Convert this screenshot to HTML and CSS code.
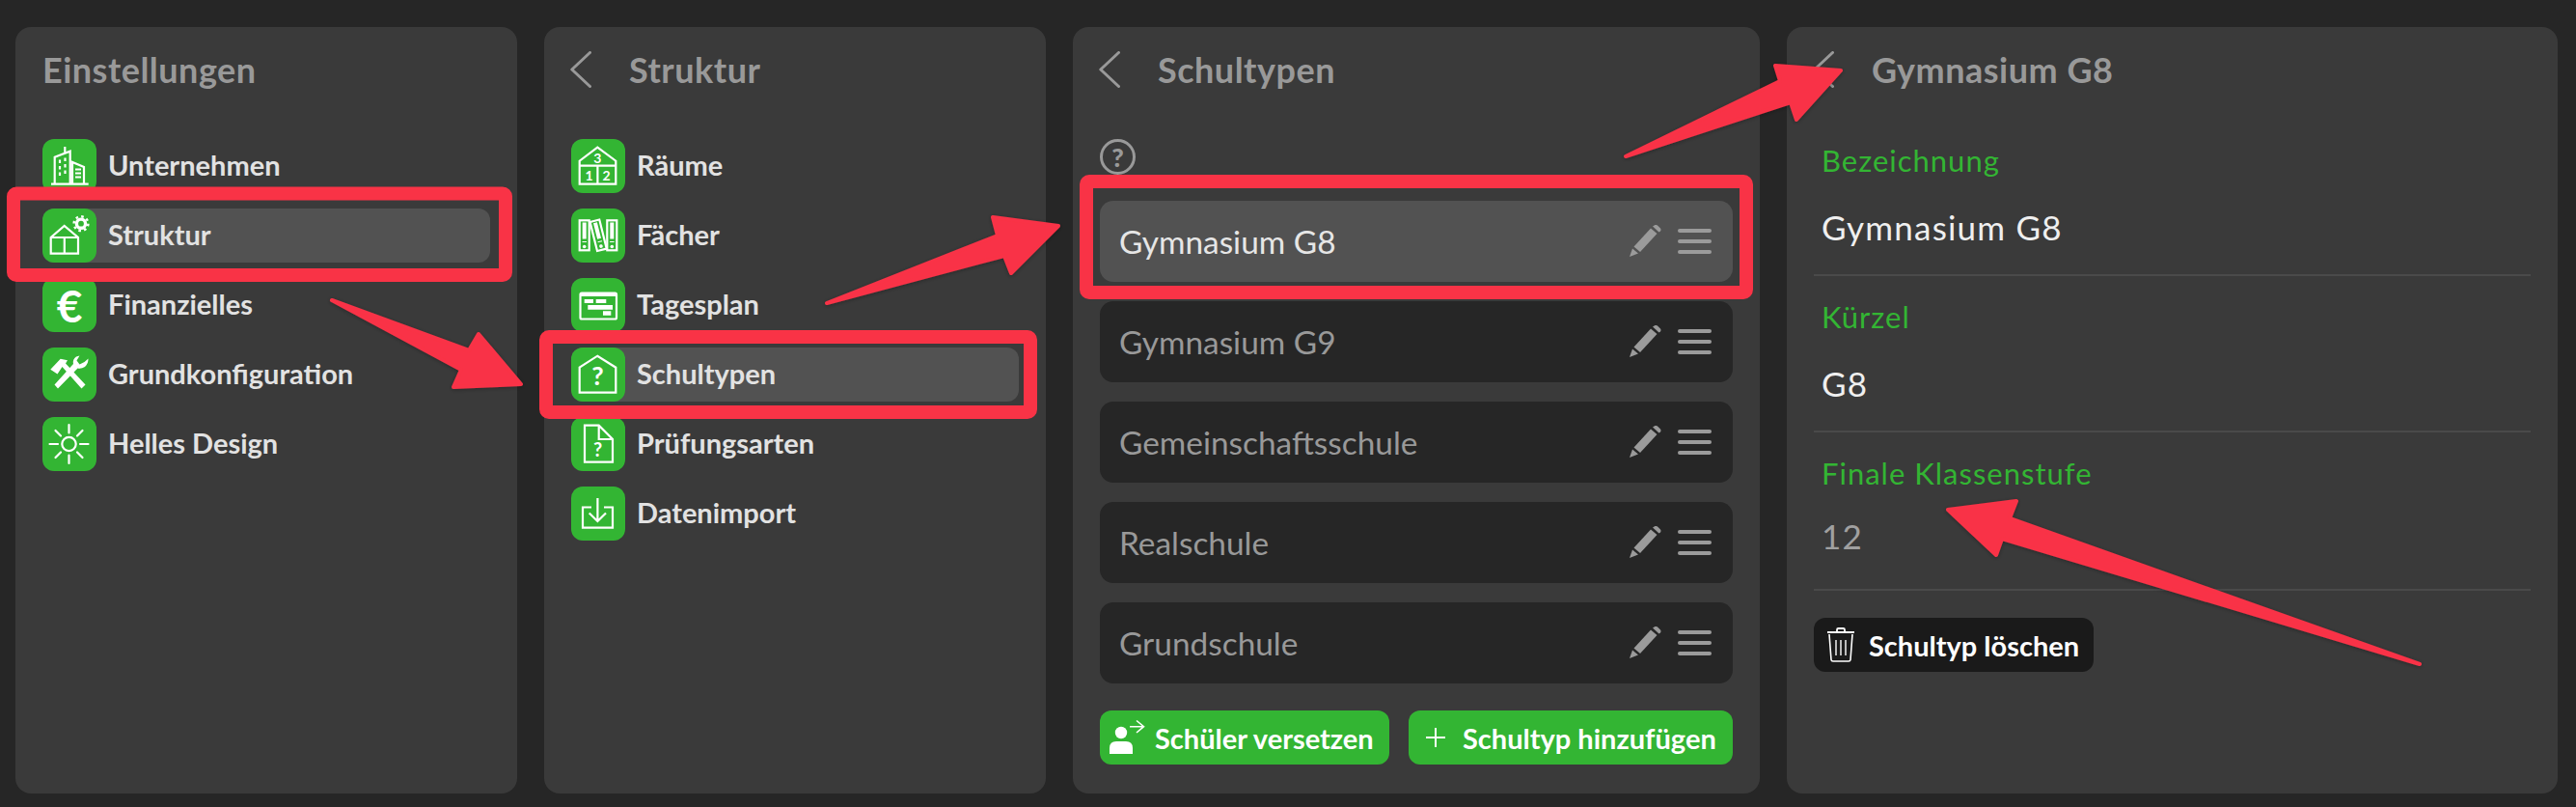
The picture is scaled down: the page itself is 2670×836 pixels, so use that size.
FILE: index.html
```html
<!DOCTYPE html>
<html lang="de">
<head>
    <meta charset="UTF-8">
    <title>Schultypen</title>
    <link rel="stylesheet" href="styles.css">
</head>
<body>
    <svg class="sprites" width="0" height="0">
        <symbol id="pencil" viewBox="0 0 34 34">
            <path d="M0 33 L3 24.5 L9 29.5 Z" fill="#9b9b9b"/>
            <path d="M4.5 22.5 L22 3.5 L28.5 9 L11 28 Z" fill="#9b9b9b"/>
            <path d="M24 1.5 L26.5 0 Q28 -0.3 29.5 1 L32 3.5 Q33 5 32 6.5 L30.5 7.5 Z" fill="#9b9b9b"/>
        </symbol>
        <symbol id="burger" viewBox="0 0 35 26">
            <rect x="0" y="0" width="35" height="4" rx="2" fill="#9b9b9b"/>
            <rect x="0" y="11" width="35" height="4" rx="2" fill="#9b9b9b"/>
            <rect x="0" y="22" width="35" height="4" rx="2" fill="#9b9b9b"/>
        </symbol>
        <symbol id="chevron" viewBox="0 0 22 38">
            <path d="M20.5 1.5 L1.8 19 L20.5 36.5" fill="none" stroke="#999" stroke-width="3" stroke-linecap="round" stroke-linejoin="round"/>
        </symbol>
    </svg>

    <div class="board">
        <!-- Einstellungen -->
        <section class="panel">
            <div class="head"><h2>Einstellungen</h2></div>
            <ul class="menu">
                <li class="menu-row">
                    <svg class="tile" viewBox="0 0 56 56">
                        <path class="ln" d="M9 46.7 H47.7 M12.7 46.7 V18.7 L28.7 12.7 V46.7 M23.3 15 V8 M31 46.7 V24 L43 29 V46.7"/>
                        <path class="ln" stroke-dasharray="3.5 3" d="M18 21.5 V38 M23.5 19.5 V38"/>
                        <path class="ln" d="M34 31.5 H40 M34 35.5 H40 M34 39.5 H40"/>
                    </svg>
                    <span class="menu-label">Unternehmen</span>
                </li>
                <li class="menu-row active">
                    <svg class="tile" viewBox="0 0 56 56">
                        <path class="ln" d="M8.7 46.7 V30 L22.7 18 L37 30 V46.7 Z M8.7 30 H37 M22.8 30 V46.7"/>
                        <circle cx="40" cy="15.7" r="4.6" fill="none" stroke="#fff" stroke-width="3.4"/>
                        <circle cx="40" cy="15.7" r="7.4" fill="none" stroke="#fff" stroke-width="2.4" stroke-dasharray="2.6 3.2"/>
                    </svg>
                    <span class="menu-label">Struktur</span>
                </li>
                <li class="menu-row">
                    <span class="tile tile-glyph">€</span>
                    <span class="menu-label">Finanzielles</span>
                </li>
                <li class="menu-row">
                    <svg class="tile" viewBox="0 0 56 56">
                        <path d="M8.3 22.7 L18.7 11.7 L26 13.3 L24 16.5 L44.5 38.5 L40.5 42.5 L20.5 20 L15.5 27.5 Z" fill="#fff"/>
                        <path d="M16 42.5 L12.5 38.5 L32 17 Q31 12 35 9.5 L38.5 8.5 L35.5 13.5 L38.5 17.5 L43.5 15 L47.5 11.5 Q47.5 17 44 20 Q40 22.5 36.5 21.5 Z" fill="#fff"/>
                    </svg>
                    <span class="menu-label">Grundkonfiguration</span>
                </li>
                <li class="menu-row">
                    <svg class="tile" viewBox="0 0 56 56">
                        <circle class="ln" cx="27.5" cy="28" r="7.2"/>
                        <path class="ln" stroke-linecap="round" d="M27.5 8 V16.5 M27.5 39.5 V48 M7.5 28 H16 M39 28 H47.5 M13.5 14 L19 19.5 M36 36.5 L41.5 42 M13.5 42 L19 36.5 M36 19.5 L41.5 14"/>
                    </svg>
                    <span class="menu-label">Helles Design</span>
                </li>
            </ul>
        </section>

        <!-- Struktur -->
        <section class="panel">
            <div class="head"><svg class="back"><use href="#chevron"/></svg><h2>Struktur</h2></div>
            <ul class="menu">
                <li class="menu-row">
                    <svg class="tile" viewBox="0 0 56 56">
                        <path class="ln" d="M8.7 46.7 V22.7 L27.3 8.7 L46.3 22.7 V46.7 Z M8.7 27.7 H46.3 M27.4 27.7 V46.7"/>
                        <text class="tile-num" x="27.4" y="25">3</text>
                        <text class="tile-num" x="18.5" y="42.5">1</text>
                        <text class="tile-num" x="36.5" y="42.5">2</text>
                    </svg>
                    <span class="menu-label">Räume</span>
                </li>
                <li class="menu-row">
                    <svg class="tile" viewBox="0 0 56 56">
                        <g id="binder">
                            <rect class="ln" x="8.7" y="12.3" width="10" height="31"/>
                            <rect x="11.7" y="14.5" width="4" height="17" fill="#fff"/>
                            <path class="ln-thin" d="M11.5 34.5 H16"/>
                            <circle cx="13.7" cy="39.5" r="1.8" fill="#fff"/>
                        </g>
                        <use href="#binder" transform="translate(28.6 0)"/>
                        <use href="#binder" transform="rotate(-14 28 28) translate(14.5 0)"/>
                    </svg>
                    <span class="menu-label">Fächer</span>
                </li>
                <li class="menu-row">
                    <svg class="tile" viewBox="0 0 56 56">
                        <rect class="ln" x="9.5" y="15.5" width="37.5" height="27" rx="1.5"/>
                        <path d="M9.5 16 H47 V19 H9.5 Z M13.7 22 H23 V26 H13.7 Z M25.7 22 H36.3 V26 H25.7 Z M17.3 28 H43 V32.7 H17.3 Z M33 34.3 H41.3 V38.7 H33 Z" fill="#fff"/>
                    </svg>
                    <span class="menu-label">Tagesplan</span>
                </li>
                <li class="menu-row active">
                    <svg class="tile" viewBox="0 0 56 56">
                        <path class="ln" d="M8.7 46.7 V20.7 L27.3 8.7 L46.3 20.7 V46.7 Z"/>
                        <text class="tile-q" x="27.5" y="39">?</text>
                    </svg>
                    <span class="menu-label">Schultypen</span>
                </li>
                <li class="menu-row">
                    <svg class="tile" viewBox="0 0 56 56">
                        <path class="ln" d="M14 8.7 H28.7 L43 23 V46.7 H14 Z M28.7 8.7 V23 H43"/>
                        <text class="tile-q tile-q-small" x="27.5" y="41">?</text>
                    </svg>
                    <span class="menu-label">Prüfungsarten</span>
                </li>
                <li class="menu-row">
                    <svg class="tile" viewBox="0 0 56 56">
                        <path class="ln" d="M21 21.5 H12 V42.7 H43 V21.5 H34"/>
                        <path class="ln" d="M27.4 12 V36 M18.7 27.5 L27.4 36 L36 27.5"/>
                    </svg>
                    <span class="menu-label">Datenimport</span>
                </li>
            </ul>
        </section>

        <!-- Schultypen -->
        <section class="panel">
            <div class="head"><svg class="back"><use href="#chevron"/></svg><h2>Schultypen</h2></div>
            <div class="help">?</div>
            <ul class="types">
                <li class="type-row active"><span>Gymnasium G8</span><svg class="pencil"><use href="#pencil"/></svg><svg class="burger"><use href="#burger"/></svg></li>
                <li class="type-row"><span>Gymnasium G9</span><svg class="pencil"><use href="#pencil"/></svg><svg class="burger"><use href="#burger"/></svg></li>
                <li class="type-row"><span>Gemeinschaftsschule</span><svg class="pencil"><use href="#pencil"/></svg><svg class="burger"><use href="#burger"/></svg></li>
                <li class="type-row"><span>Realschule</span><svg class="pencil"><use href="#pencil"/></svg><svg class="burger"><use href="#burger"/></svg></li>
                <li class="type-row"><span>Grundschule</span><svg class="pencil"><use href="#pencil"/></svg><svg class="burger"><use href="#burger"/></svg></li>
            </ul>
            <div class="actions">
                <button class="btn btn-move">
                    <svg class="btn-icon" viewBox="0 0 50 56">
                        <circle cx="22" cy="23" r="6.2" fill="#fff"/>
                        <path d="M10 45 V39 Q10 32 17 32 H27 Q34 32 34 39 V45 Z" fill="#fff"/>
                        <path d="M31 16.7 H45.5 M38 10.5 L45.5 16.7 L38 23" fill="none" stroke="#fff" stroke-width="1.6"/>
                    </svg>
                    Schüler versetzen
                </button>
                <button class="btn btn-add">
                    <svg class="plus" viewBox="0 0 20 20"><path d="M10 0 V20 M0 10 H20" stroke="#fff" stroke-width="2"/></svg>
                    Schultyp hinzufügen
                </button>
            </div>
        </section>

        <!-- Gymnasium G8 -->
        <section class="panel">
            <div class="head"><svg class="back"><use href="#chevron"/></svg><h2>Gymnasium G8</h2></div>
            <div class="field">
                <div class="field-label">Bezeichnung</div>
                <div class="field-value">Gymnasium G8</div>
            </div>
            <div class="field">
                <div class="field-label">Kürzel</div>
                <div class="field-value">G8</div>
            </div>
            <div class="field field-disabled">
                <div class="field-label">Finale Klassenstufe</div>
                <div class="field-value">12</div>
            </div>
            <button class="btn btn-delete">
                <svg class="btn-icon" viewBox="0 0 50 56">
                    <path d="M14 15 H42 M24 15 V12.5 Q24 11 25.5 11 H30.5 Q32 11 32 12.5 V15" fill="none" stroke="#fff" stroke-width="1.8"/>
                    <path d="M16 17 L18 43.5 Q18.2 45 20 45 H36 Q37.8 45 38 43.5 L40 17" fill="none" stroke="#fff" stroke-width="1.6"/>
                    <path d="M23 23 V39 M28 23 V39 M33 23 V39" stroke="#fff" stroke-width="1.4"/>
                </svg>
                Schultyp löschen
            </button>
        </section>
    </div>

    <!-- annotations drawn on top of the screenshot -->
    <svg class="marks" viewBox="0 0 2670 836">
        <defs>
            <filter id="soft" x="-5%" y="-5%" width="110%" height="115%">
                <feDropShadow dx="0" dy="1" stdDeviation="2" flood-color="#000" flood-opacity="0.3"/>
            </filter>
        </defs>
        <rect class="frame" x="14" y="200.5" width="510" height="84.5" rx="3"/>
        <rect class="frame" x="566" y="349" width="502" height="78" rx="3"/>
        <rect class="frame" x="1126" y="188" width="684" height="115" rx="3"/>
        <g filter="url(#soft)">
            <polygon class="arrow" points="344,311 486,363 496,346 540,398 470,401 478,383"/>
            <polygon class="arrow" points="857,314 1034,244 1029,225 1097,234 1048,283 1041,265"/>
            <polygon class="arrow" points="1685,162 1845,84 1840,68 1908,73 1862,124 1856,106"/>
            <polygon class="arrow" points="2508,688 2083,537 2090,519 2019,528 2069,575 2075,558"/>
        </g>
    </svg>
</body>
</html>
```

FILE: styles.css
```css
* {
    box-sizing: border-box;
}

html, body {
    margin: 0;
    height: 836px;
    overflow: hidden;
}

body {
    background: #262626;
    font-family: 'Lato', 'Noto Sans', sans-serif;
    position: relative;
}

.sprites {
    position: absolute;
}

.board {
    display: grid;
    grid-template-columns: 520px 520px 712px 799px;
    gap: 28px;
    padding: 28px 19px 14px 16px;
    height: 836px;
}

.panel {
    background: #3a3a3a;
    border-radius: 16px;
    padding: 0 28px;
}

/* panel heading */
.head {
    display: flex;
    align-items: center;
    height: 96px;
    padding-bottom: 8px;
    color: #999;
}

.head h2 {
    margin: 0;
    font-size: 36px;
    font-weight: 700;
    line-height: 60px;
    letter-spacing: 0.5px;
}

.back {
    width: 22px;
    height: 38px;
    margin-left: -1px;
    margin-right: 39px;
    flex: none;
}

/* green icon menu */
.menu {
    list-style: none;
    margin: 20px 0 0;
    padding: 0;
    display: flex;
    flex-direction: column;
    gap: 16px;
}

.menu-row {
    display: flex;
    align-items: center;
    gap: 12px;
    height: 56px;
    border-radius: 12px;
    color: #e2e2e2;
    font-size: 29px;
    font-weight: 700;
}

.menu-label {
    padding-bottom: 3px;
}

.menu-row.active {
    background: #525252;
}

.tile {
    width: 56px;
    height: 56px;
    flex: none;
    background: #33b533;
    border-radius: 12px;
}

.tile-glyph {
    display: flex;
    align-items: center;
    justify-content: center;
    color: #fff;
    font-size: 46px;
    font-weight: 700;
}

.ln {
    fill: none;
    stroke: #fff;
    stroke-width: 2.2;
}

.ln-thin {
    fill: none;
    stroke: #fff;
    stroke-width: 1;
}

.tile-num {
    fill: #fff;
    font-size: 14px;
    text-anchor: middle;
}

.tile-q {
    fill: #fff;
    font-size: 27px;
    font-weight: 700;
    text-anchor: middle;
}

.tile-q-small {
    font-size: 20px;
}

/* school type list */
.help {
    width: 37px;
    height: 37px;
    margin-top: 20px;
    border: 3px solid #999;
    border-radius: 50%;
    color: #999;
    font-size: 27px;
    font-weight: 900;
    line-height: 31px;
    text-align: center;
}

.types {
    list-style: none;
    margin: 27px 0 0;
    padding: 0;
    display: flex;
    flex-direction: column;
    gap: 20px;
}

.type-row {
    display: flex;
    align-items: center;
    height: 84px;
    padding: 0 22px 0 20px;
    background: #262626;
    border-radius: 14px;
    color: #999;
    font-size: 33.4px;
}

.type-row span {
    flex: 1;
}

.type-row.active {
    background: #525252;
    color: #e6e6e6;
}

.pencil {
    width: 34px;
    height: 34px;
    margin-right: 16px;
}

.burger {
    width: 35px;
    height: 26px;
}

.actions {
    display: flex;
    gap: 20px;
    margin-top: 28px;
}

.btn {
    display: flex;
    align-items: center;
    height: 56px;
    padding: 0;
    border: none;
    border-radius: 12px;
    color: #fff;
    font-family: inherit;
    font-size: 29px;
    font-weight: 700;
    white-space: nowrap;
}

.btn-move,
.btn-add {
    background: #33b533;
}

.btn-move {
    width: 300px;
}

.btn-add {
    width: 336px;
    padding-left: 18px;
}

.btn-icon {
    width: 50px;
    height: 56px;
    flex: none;
    margin-right: 7px;
}

.plus {
    width: 20px;
    height: 20px;
    margin-right: 18px;
}

/* detail form */
.field {
    height: 162px;
    padding-top: 22px;
    border-bottom: 2px solid #4a4a4a;
}

.field-label {
    padding-left: 8px;
    color: #33b533;
    font-size: 31px;
    line-height: 40px;
    letter-spacing: 1px;
}

.field-value {
    margin-top: 27px;
    padding-left: 8px;
    color: #efefef;
    font-size: 35px;
    line-height: 44px;
    letter-spacing: 1.2px;
}

.field-disabled {
    height: 164px;
}

.field-disabled .field-value {
    margin-top: 23px;
    color: #a0a0a0;
}

.btn-delete {
    margin-top: 28px;
    width: 290px;
    background: #1a1a1a;
}

/* red annotations */
.marks {
    position: absolute;
    left: 0;
    top: 0;
    width: 2670px;
    height: 836px;
    pointer-events: none;
}

.frame {
    fill: none;
    stroke: #f93346;
    stroke-width: 14;
}

.arrow {
    fill: #f93346;
    stroke: #f93346;
    stroke-width: 4;
    stroke-linejoin: round;
}
```
